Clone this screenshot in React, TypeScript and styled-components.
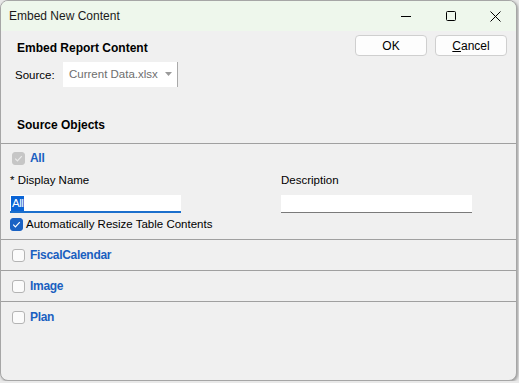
import React from "react";
import styled, { createGlobalStyle } from "styled-components";

const GlobalStyle = createGlobalStyle`
  html, body {
    margin: 0;
    padding: 0;
    background: #e9e9e9;
  }
  body {
    font-family: "Liberation Sans", Arial, sans-serif;
    font-size: 11.5px;
    color: #000;
  }
`;

const Window = styled.div`
  width: 517px;
  height: 381px;
  box-sizing: border-box;
  border: 1px solid #a6a6a6;
  border-radius: 8px;
  overflow: hidden;
  background: #f0f0f0;
  box-shadow: 1px 1px 3px rgba(0, 0, 0, 0.35);
  display: flex;
  flex-direction: column;
`;

const TitleBar = styled.div`
  height: 30px;
  flex-shrink: 0;
  background: #eef7ec;
  display: flex;
  align-items: center;
  padding-left: 8px;
`;

const TitleText = styled.span`
  flex: 1;
  font-size: 12px;
  color: #1a1a1a;
`;

const Control = styled.div<{ $w: number }>`
  width: ${(p) => p.$w}px;
  height: 30px;
  display: flex;
  align-items: center;
  justify-content: center;
`;

const Header = styled.div`
  padding: 4px 9px 0 14px;
  height: 112px;
  box-sizing: border-box;
  display: flex;
  flex-direction: column;
`;

const TopRow = styled.div`
  display: flex;
  align-items: flex-start;
`;

const SectionTitle = styled.div<{ $top?: number }>`
  font-weight: bold;
  font-size: 12px;
  line-height: 14px;
  margin-left: 2px;
  margin-top: ${(p) => p.$top ?? 0}px;
  flex: 1;
`;

const Buttons = styled.div`
  display: flex;
  gap: 8px;
`;

const Button = styled.button`
  width: 72px;
  height: 21px;
  padding: 0;
  background: #fdfdfd;
  border: 1px solid #cfcfcf;
  border-radius: 4px;
  font-family: inherit;
  font-size: 12px;
  color: #000;
  u {
    text-decoration: underline;
  }
`;

const SourceRow = styled.div`
  display: flex;
  align-items: center;
  margin-top: 6px;
`;

const SourceLabel = styled.span`
  width: 48px;
`;

const Combo = styled.div`
  width: 115px;
  height: 25px;
  box-sizing: border-box;
  background: #fff;
  border-right: 1px solid #a9a9a9;
  display: flex;
  align-items: center;
  padding: 0 5px 2px 6px;
  color: #6e6e6e;
  span {
    flex: 1;
  }
`;

const ObjectList = styled.div`
  border-top: 1px solid #a0a0a0;
  display: flex;
  flex-direction: column;
`;

const Section = styled.div`
  border-bottom: 1px solid #a0a0a0;
  padding: 0 0 8px 9px;
`;

const ObjectRow = styled.div<{ $last?: boolean }>`
  height: 30px;
  display: flex;
  align-items: center;
  padding-left: 11px;
  gap: 5px;
  border-bottom: ${(p) => (p.$last ? "none" : "1px solid #a0a0a0")};
`;

const AllRow = styled.div`
  height: 28px;
  display: flex;
  align-items: center;
  padding-left: 2px;
  gap: 5px;
`;

const ObjectName = styled.span`
  font-weight: bold;
  font-size: 12px;
  color: #1a5fc0;
  letter-spacing: -0.3px;
`;

const Box = styled.div<{ $variant: "off" | "on" | "disabled" }>`
  width: 13px;
  height: 13px;
  box-sizing: border-box;
  border-radius: 3px;
  display: flex;
  align-items: center;
  justify-content: center;
  background: ${(p) =>
    p.$variant === "on" ? "#1a62c4" : p.$variant === "disabled" ? "#c6c6c6" : "#fbfbfb"};
  border: 1px solid
    ${(p) => (p.$variant === "on" ? "#1a62c4" : p.$variant === "disabled" ? "#c6c6c6" : "#b4b4b4")};
`;

const Fields = styled.div`
  display: grid;
  grid-template-columns: 271px 191px;
`;

const FieldLabel = styled.div`
  line-height: 16px;
  height: 16px;
  margin-bottom: 7px;
`;

const Input = styled.div<{ $focused?: boolean }>`
  height: 18px;
  box-sizing: border-box;
  background: #fff;
  border-bottom: ${(p) => (p.$focused ? "2px solid #1b6fcc" : "1px solid #7a7a7a")};
  display: flex;
  align-items: center;
  padding-left: 1px;
`;

const Selection = styled.span`
  background: #0a64d6;
  color: #fff;
  line-height: 15px;
  padding: 0 1px;
  letter-spacing: -0.5px;
`;

const FieldBox = styled.div<{ $width: number }>`
  width: ${(p) => p.$width}px;
`;

const AutoRow = styled.div`
  margin-top: 4px;
  height: 14px;
  display: flex;
  align-items: center;
  gap: 3px;
`;

const Check: React.FC<{ color: string }> = ({ color }) => (
  <svg width="11" height="11" viewBox="0 0 11 11">
    <path d="M2.2 5.6 L4.4 7.8 L8.8 3.2" fill="none" stroke={color} strokeWidth="1.2" />
  </svg>
);

const CheckBox: React.FC<{ variant: "off" | "on" | "disabled" }> = ({ variant }) => (
  <Box $variant={variant}>
    {variant === "on" && <Check color="#fff" />}
    {variant === "disabled" && <Check color="#eaeaea" />}
  </Box>
);

const objects = ["FiscalCalendar", "Image", "Plan"];

export default function App() {
  return (
    <>
      <GlobalStyle />
      <Window>
        <TitleBar>
          <TitleText>Embed New Content</TitleText>
          <Control $w={45}>
            <svg width="10" height="10" viewBox="0 0 10 10">
              <path d="M0 5.5 H10" stroke="#000" strokeWidth="1" />
            </svg>
          </Control>
          <Control $w={46}>
            <svg width="10" height="10" viewBox="0 0 10 10">
              <rect x="0.5" y="0.5" width="9" height="9" rx="1" fill="none" stroke="#000" />
            </svg>
          </Control>
          <Control $w={42}>
            <svg width="11" height="11" viewBox="0 0 11 11">
              <path d="M0.5 0.5 L10.5 10.5 M10.5 0.5 L0.5 10.5" stroke="#000" strokeWidth="1" />
            </svg>
          </Control>
        </TitleBar>
        <Header>
          <TopRow>
            <SectionTitle $top={6}>Embed Report Content</SectionTitle>
            <Buttons>
              <Button>OK</Button>
              <Button>
                <u>C</u>ancel
              </Button>
            </Buttons>
          </TopRow>
          <SourceRow>
            <SourceLabel>Source:</SourceLabel>
            <Combo>
              <span>Current Data.xlsx</span>
              <svg width="7" height="4" viewBox="0 0 7 4">
                <path d="M0 0 H7 L3.5 4 Z" fill="#9a9a9a" />
              </svg>
            </Combo>
          </SourceRow>
          <SectionTitle $top={31}>Source Objects</SectionTitle>
        </Header>
        <ObjectList>
          <Section>
            <AllRow>
              <CheckBox variant="disabled" />
              <ObjectName>All</ObjectName>
            </AllRow>
            <Fields>
              <div>
                <FieldLabel>* Display Name</FieldLabel>
                <FieldBox $width={171}>
                  <Input $focused>
                    <Selection>All</Selection>
                  </Input>
                </FieldBox>
              </div>
              <div>
                <FieldLabel>Description</FieldLabel>
                <FieldBox $width={191}>
                  <Input />
                </FieldBox>
              </div>
            </Fields>
            <AutoRow>
              <CheckBox variant="on" />
              <span>Automatically Resize Table Contents</span>
            </AutoRow>
          </Section>
          {objects.map((name, i) => (
            <ObjectRow key={name} $last={i === objects.length - 1}>
              <CheckBox variant="off" />
              <ObjectName>{name}</ObjectName>
            </ObjectRow>
          ))}
        </ObjectList>
      </Window>
    </>
  );
}
